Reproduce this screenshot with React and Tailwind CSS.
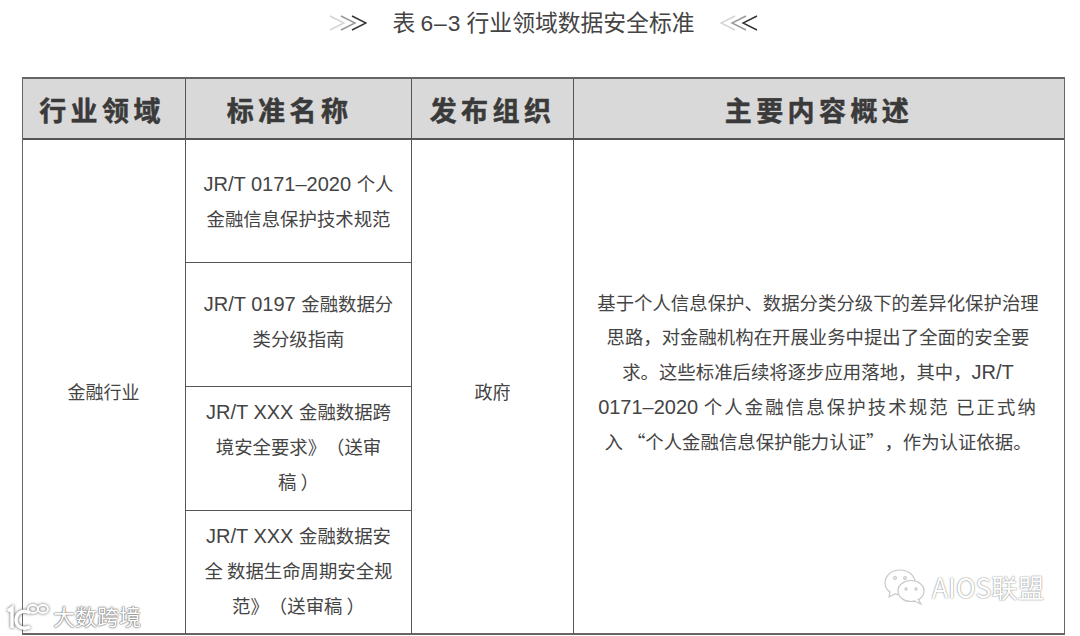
import React from 'react';

const cjkFont = "font-['Noto_Sans_CJK_SC','Liberation_Sans',sans-serif]";

// latin parts of the table text are a size up from the chinese
function L({ children }) {
  return <span className="font-['Liberation_Sans',sans-serif] text-[20px] leading-none">{children}</span>;
}

const standards = [
  { lines: [<><L>JR/T 0171–2020 </L>个人</>, '金融信息保护技术规范'], h: 'h-[123px]', pad: 'pb-[1px]' },
  { lines: [<><L>JR/T 0197 </L>金融数据分</>, '类分级指南'], h: 'h-[124px]', pad: 'pb-[7px]' },
  { lines: [<><L>JR/T XXX </L>金融数据跨</>, '境安全要求》（送审', '稿 ）'], h: 'h-[124px]', pad: 'pb-[4px]' },
  { lines: [<><L>JR/T XXX </L>金融数据安</>, '全 数据生命周期安全规', '范》（送审稿 ）'], h: 'h-[123px]', pad: 'pb-[5px]' },
];

function Chevrons({ flip }) {
  const strokes = flip ? ['#333', '#999', '#d4d4d4'] : ['#d4d4d4', '#999', '#333'];
  return (
    <svg width="38" height="20" viewBox="0 0 38 20" fill="none" className={flip ? 'rotate-180' : ''}>
      {strokes.map((color, i) => (
        <path key={i} d={`M${1 + i * 11} 3L${15 + i * 11} 10L${1 + i * 11} 17`} stroke={color} strokeWidth="1.4" />
      ))}
    </svg>
  );
}

function HeaderCell({ children, border, pad = '' }) {
  return (
    <div className={`flex items-center justify-center pt-[4px] ${pad} font-bold text-[27px] tracking-[4.4px] [-webkit-text-stroke:0.5px_#3a3a3a] text-[#3a3a3a] bg-[#d9d9d9] ${border ? 'border-r border-[#555]' : ''}`}>
      {children}
    </div>
  );
}

function WeChatMark() {
  return (
    <svg width="44" height="38" viewBox="0 0 44 38" fill="none" stroke="#c8c8c8" strokeWidth="1.2">
      <path d="M17 2C8 2 2 8 2 15c0 4 2 7 5 9l-1 5 6-3c1 .3 3 .5 5 .5" fill="#fff" />
      <path d="M17 2c8 0 14 5 15 11" />
      <ellipse cx="28" cy="23" rx="13" ry="10.5" fill="#fff" />
      <path d="M35 31l3 5-7-3" fill="#fff" />
      <circle cx="12" cy="10" r="1.4" />
      <circle cx="22" cy="10" r="1.4" />
      <circle cx="23" cy="21" r="1.1" />
      <circle cx="33" cy="21" r="1.1" />
    </svg>
  );
}

function CornerLogo() {
  return (
    <svg width="44" height="30" viewBox="0 0 44 30" fill="none" stroke="#fff" strokeWidth="3.5" className="drop-shadow-[0_0_1.5px_#555]">
      <path d="M2 10l4-3v20" />
      <path d="M24 12c-7-4-14 0-14 7s7 10 14 7" />
      <ellipse cx="27" cy="8" rx="5" ry="4" strokeWidth="1.8" />
      <ellipse cx="37" cy="8" rx="5" ry="4" strokeWidth="1.8" />
    </svg>
  );
}

export default function App() {
  return (
    <div className={`relative w-[1080px] h-[636px] overflow-hidden bg-white text-[#444] ${cjkFont}`}>
      <div className="flex items-center justify-center h-[46px] pl-[7px]">
        <Chevrons />
        <span className="text-[22.8px] mx-[25px] pb-[2px] text-[#444]">
          表 <span className="font-['Liberation_Sans',sans-serif] tracking-[1px] leading-none">6–3</span> 行业领域数据安全标准
        </span>
        <Chevrons flip />
      </div>

      <div className="mt-[31px] ml-[22px] w-[1043px] h-[558px] border border-[#666] border-b-2 border-t-2">
        <div className="grid grid-cols-[163px_226px_162px_1fr] h-[61px] border-b-2 border-[#555]">
          <HeaderCell border pad="pr-[4px]">行业领域</HeaderCell>
          <HeaderCell border pad="pr-[18px]">标准名称</HeaderCell>
          <HeaderCell border>发布组织</HeaderCell>
          <HeaderCell>主要内容概述</HeaderCell>
        </div>
        <div className="grid grid-cols-[163px_226px_162px_1fr] text-[18.4px] leading-[35px] text-center [text-spacing-trim:space-all]">
          <div className="flex items-center justify-center pt-[8px] pr-[1px] border-r border-[#555] text-[18px]">金融行业</div>
          <div className="flex flex-col border-r border-[#555]">
            {standards.map((s, i) => (
              <div key={i} className={`${s.h} ${s.pad} flex flex-col items-center justify-center ${i < 3 ? 'border-b border-[#555]' : ''}`}>
                {s.lines.map((line, j) => (
                  <div key={j} className="whitespace-nowrap">{line}</div>
                ))}
              </div>
            ))}
          </div>
          <div className="flex items-center justify-center pt-[8px] border-r border-[#555] text-[18px]">政府</div>
          <div className="flex flex-col items-center justify-center pb-[31px] pr-[2px] leading-[34.7px] whitespace-nowrap">
            <div>基于个人信息保护、数据分类分级下的差异化保护治理</div>
            <div>思路，对金融机构在开展业务中提出了全面的安全要</div>
            <div>求。这些标准后续将逐步应用落地，其中，<L>JR/T</L></div>
            <div><L>0171–2020 </L><span className="tracking-[2.1px]">个人金融信息保护技术规范 已正式纳</span></div>
            <div>入 “个人金融信息保护能力认证”，作为认证依据。</div>
          </div>
        </div>
      </div>

      <div className="absolute left-[6px] top-[599px] flex items-center gap-[3px] text-[22px] text-white [text-shadow:0_0_2px_#555,0_0_1px_#555]">
        <CornerLogo />
        <span>大数跨境</span>
      </div>
      <div className="absolute left-[883px] top-[567px] flex items-center gap-[5px] text-[26.5px] text-white [text-shadow:0_0_1.5px_#555]">
        <WeChatMark />
        <span>AIOS联盟</span>
      </div>
    </div>
  );
}
